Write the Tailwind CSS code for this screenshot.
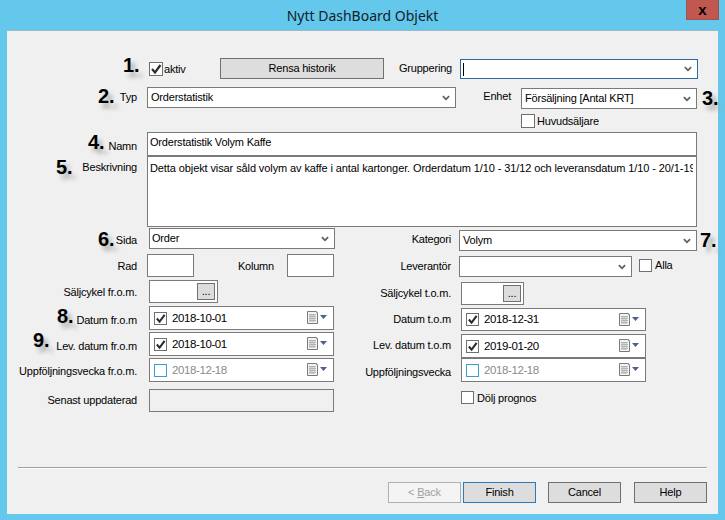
<!DOCTYPE html>
<html lang="sv">
<head>
    <meta charset="UTF-8">
    <title>Nytt DashBoard Objekt</title>
    <script src="https://cdn.jsdelivr.net/npm/@tailwindcss/browser@4"></script>
</head>
<body class="w-[725px] h-[520px] overflow-hidden bg-[#63c8ec] font-['Liberation_Sans',sans-serif] text-[11px] leading-[13px] tracking-[-0.2px] text-black">
    <svg class="hidden">
        <symbol id="chev" viewBox="0 0 9 6"><path d="M1 1 L4.5 4.5 L8 1" fill="none" stroke="#5f5f5f" stroke-width="2"/></symbol>
        <symbol id="tick" viewBox="0 0 12 12"><path d="M2 6 L5 9.5 L10.5 2" fill="none" stroke="#2b2b2b" stroke-width="2.2"/></symbol>
        <symbol id="cal" viewBox="0 0 21 14">
            <path d="M0.5 0.5 H9.5 V1.5 H10.5 V12.5 H0.5 Z" fill="#f3f3f3" stroke="#7a7a7a"/>
            <path d="M2 3.5 H9 M2 5.5 H9 M2 7.5 H9 M2 9.5 H9 M3 3 V11 M5 3 V11 M7 3 V11" stroke="#b4b4b4" stroke-width="1"/>
            <path d="M13 4 H20 L16.5 8 Z" fill="#4c5f8c"/>
        </symbol>
    </svg>

    <header class="relative h-[30px] flex items-center justify-center font-['Noto_Sans',sans-serif] text-[14px] tracking-normal text-[#14222a]">
        <span>Nytt DashBoard Objekt</span>
        <button class="absolute right-[6px] top-0 w-[33px] h-[20px] bg-[#c1584f] border border-[#9b5550] border-t-0 flex items-center justify-center font-['Liberation_Sans',sans-serif] font-bold text-[15px] leading-[14px] text-black">x</button>
    </header>

    <main class="relative ml-[7px] w-[711px] h-[484px] bg-[#f0f0f0] border-t border-[#9fb8c4] pt-[27px]">
        <!-- topp -->
        <div class="flex h-[21px]">
            <span class="ml-[142px] mt-[4px] w-[14px] h-[14px] bg-white border border-[#707070] flex items-center justify-center"><svg class="w-[12px] h-[12px]"><use href="#tick"/></svg></span>
            <span class="ml-[1px] mt-[5px] w-[56px]">aktiv</span>
            <button class="w-[164px] h-[21px] bg-[#dddddd] border border-[#707070]">Rensa historik</button>
            <span class="w-[68px] mt-[4px] text-right">Gruppering</span>
            <div class="ml-[8px] mt-[1px] w-[238px] h-[20px] bg-white border border-[#2d6a9f] flex items-center justify-between pl-[2px] pr-[5px]">
                <span class="w-px h-[13px] bg-black"></span>
                <svg class="w-[8px] h-[6px]"><use href="#chev"/></svg>
            </div>
        </div>
        <div class="flex mt-[8px] h-[22px]">
            <span class="w-[130px] mt-[4px] text-right">Typ</span>
            <div class="ml-[10px] w-[309px] h-[21px] bg-white border border-[#7a7a7a] flex items-center justify-between pl-[3px] pr-[5px]">
                <span>Orderstatistik</span>
                <svg class="w-[8px] h-[6px]"><use href="#chev"/></svg>
            </div>
            <span class="w-[55px] mt-[3px] text-right">Enhet</span>
            <div class="ml-[10px] mt-[1px] w-[176px] h-[21px] bg-white border border-[#7a7a7a] flex items-center justify-between pl-[3px] pr-[5px]">
                <span>Försäljning [Antal KRT]</span>
                <svg class="w-[8px] h-[6px]"><use href="#chev"/></svg>
            </div>
        </div>
        <div class="flex mt-[5px] h-[14px] pl-[514px]">
            <span class="w-[14px] h-[14px] bg-white border border-[#707070]"></span>
            <span class="ml-[2px] mt-[1px]">Huvudsäljare</span>
        </div>
        <div class="flex mt-[4px] h-[24px]">
            <span class="w-[130px] mt-[8px] text-right">Namn</span>
            <div class="ml-[10px] w-[550px] h-[24px] bg-white border border-[#7a7a7a] pl-[2px] pb-[3px] flex items-center">Orderstatistik Volym Kaffe</div>
        </div>
        <div class="flex h-[71px]">
            <span class="w-[130px] mt-[5px] text-right">Beskrivning</span>
            <div class="ml-[10px] w-[550px] h-[71px] bg-white border border-[#7a7a7a] pl-[2px] pt-[5px]">
                <div class="w-[543px] overflow-hidden whitespace-nowrap tracking-[-0.1px]">Detta objekt visar såld volym av kaffe i antal kartonger. Orderdatum 1/10 - 31/12 och leveransdatum 1/10 - 20/1-19</div>
            </div>
        </div>

        <!-- två kolumner -->
        <div class="flex mt-[1px]">
            <div class="w-[335px]">
                <div class="flex h-[21px]">
                    <span class="w-[130px] mt-[6px] text-right">Sida</span>
                    <div class="ml-[12px] w-[186px] h-[21px] bg-white border border-[#7a7a7a] flex items-center justify-between pl-[2px] pr-[5px]">
                        <span>Order</span>
                        <svg class="w-[8px] h-[6px]"><use href="#chev"/></svg>
                    </div>
                </div>
                <div class="flex mt-[5px] h-[23px]">
                    <span class="w-[130px] mt-[6px] text-right">Rad</span>
                    <div class="ml-[10px] w-[47px] h-[23px] bg-white border border-[#7a7a7a]"></div>
                    <span class="w-[80px] mt-[6px] text-right">Kolumn</span>
                    <div class="ml-[13px] w-[47px] h-[23px] bg-white border border-[#7a7a7a]"></div>
                </div>
                <div class="flex mt-[3px] h-[23px]">
                    <span class="w-[130px] mt-[6px] text-right">Säljcykel fr.o.m.</span>
                    <div class="ml-[12px] w-[69px] h-[23px] bg-white border border-[#7a7a7a] pl-[47px] pt-[2px]">
                        <button class="block w-[18px] h-[17px] bg-[#dddddd] border border-[#707070] leading-[11px]">...</button>
                    </div>
                </div>
                <div class="flex mt-[3px] h-[24px]">
                    <span class="w-[130px] mt-[8px] text-right">Datum fr.o.m</span>
                    <div class="ml-[12px] w-[185px] h-[24px] bg-white border border-[#7a7a7a] flex items-center pl-[4px] pr-[5px]">
                        <span class="w-[13px] h-[13px] border border-[#707070] flex items-center justify-center"><svg class="w-[11px] h-[11px]"><use href="#tick"/></svg></span>
                        <span class="ml-[5px] flex-1 text-[11.5px] tracking-[-0.4px]">2018-10-01</span>
                        <svg class="w-[21px] h-[14px]"><use href="#cal"/></svg>
                    </div>
                </div>
                <div class="flex mt-[2px] h-[24px]">
                    <span class="w-[130px] mt-[8px] text-right">Lev. datum fr.o.m</span>
                    <div class="ml-[12px] w-[185px] h-[24px] bg-white border border-[#7a7a7a] flex items-center pl-[4px] pr-[5px]">
                        <span class="w-[13px] h-[13px] border border-[#707070] flex items-center justify-center"><svg class="w-[11px] h-[11px]"><use href="#tick"/></svg></span>
                        <span class="ml-[5px] flex-1 text-[11.5px] tracking-[-0.4px]">2018-10-01</span>
                        <svg class="w-[21px] h-[14px]"><use href="#cal"/></svg>
                    </div>
                </div>
                <div class="flex mt-[2px] h-[24px]">
                    <span class="w-[130px] mt-[7px] text-right whitespace-nowrap">Uppföljningsvecka fr.o.m.</span>
                    <div class="ml-[12px] w-[185px] h-[24px] bg-white border border-[#7a7a7a] flex items-center pl-[4px] pr-[5px]">
                        <span class="w-[13px] h-[13px] border border-[#3a9bd8]"></span>
                        <span class="ml-[5px] flex-1 text-[11.5px] tracking-[-0.4px] text-[#8a8a8a]">2018-12-18</span>
                        <svg class="w-[21px] h-[14px]"><use href="#cal"/></svg>
                    </div>
                </div>
                <div class="flex mt-[7px] h-[23px]">
                    <span class="w-[130px] mt-[5px] text-right">Senast uppdaterad</span>
                    <div class="ml-[12px] w-[185px] h-[23px] bg-[#f0f0f0] border border-[#7a7a7a]"></div>
                </div>
            </div>
            <div class="w-[376px] mt-[2px]">
                <div class="flex h-[21px]">
                    <span class="w-[109px] mt-[3px] text-right">Kategori</span>
                    <div class="ml-[8px] w-[238px] h-[21px] bg-white border border-[#7a7a7a] flex items-center justify-between pl-[3px] pr-[5px]">
                        <span>Volym</span>
                        <svg class="w-[8px] h-[6px]"><use href="#chev"/></svg>
                    </div>
                </div>
                <div class="flex mt-[5px] h-[21px]">
                    <span class="w-[109px] mt-[4px] text-right">Leverantör</span>
                    <div class="ml-[8px] w-[173px] h-[21px] bg-white border border-[#7a7a7a] flex items-center justify-end pr-[5px]">
                        <svg class="w-[8px] h-[6px]"><use href="#chev"/></svg>
                    </div>
                    <span class="ml-[7px] mt-[3px] w-[13px] h-[13px] bg-white border border-[#707070]"></span>
                    <span class="ml-[3px] mt-[3px]">Alla</span>
                </div>
                <div class="flex mt-[5px] h-[23px]">
                    <span class="w-[109px] mt-[5px] text-right">Säljcykel t.o.m.</span>
                    <div class="ml-[10px] w-[63px] h-[23px] bg-white border border-[#7a7a7a] pl-[41px] pt-[2px]">
                        <button class="block w-[18px] h-[17px] bg-[#dddddd] border border-[#707070] leading-[11px]">...</button>
                    </div>
                </div>
                <div class="flex mt-[3px] h-[23px]">
                    <span class="w-[109px] mt-[5px] text-right">Datum t.o.m</span>
                    <div class="ml-[10px] w-[185px] h-[23px] bg-white border border-[#7a7a7a] flex items-center pl-[4px] pr-[5px]">
                        <span class="w-[13px] h-[13px] border border-[#707070] flex items-center justify-center"><svg class="w-[11px] h-[11px]"><use href="#tick"/></svg></span>
                        <span class="ml-[5px] flex-1 text-[11.5px] tracking-[-0.4px]">2018-12-31</span>
                        <svg class="w-[21px] h-[14px]"><use href="#cal"/></svg>
                    </div>
                </div>
                <div class="flex mt-[3px] h-[24px]">
                    <span class="w-[109px] mt-[5px] text-right">Lev. datum t.o.m</span>
                    <div class="ml-[10px] w-[185px] h-[24px] bg-white border border-[#7a7a7a] flex items-center pl-[4px] pr-[5px]">
                        <span class="w-[13px] h-[13px] border border-[#707070] flex items-center justify-center"><svg class="w-[11px] h-[11px]"><use href="#tick"/></svg></span>
                        <span class="ml-[5px] flex-1 text-[11.5px] tracking-[-0.4px]">2019-01-20</span>
                        <svg class="w-[21px] h-[14px]"><use href="#cal"/></svg>
                    </div>
                </div>
                <div class="flex h-[24px]">
                    <span class="w-[109px] mt-[8px] text-right whitespace-nowrap">Uppföljningsvecka</span>
                    <div class="ml-[10px] w-[185px] h-[24px] bg-white border border-[#7a7a7a] flex items-center pl-[4px] pr-[5px]">
                        <span class="w-[13px] h-[13px] border border-[#3a9bd8]"></span>
                        <span class="ml-[5px] flex-1 text-[11.5px] tracking-[-0.4px] text-[#8a8a8a]">2018-12-18</span>
                        <svg class="w-[21px] h-[14px]"><use href="#cal"/></svg>
                    </div>
                </div>
                <div class="flex mt-[9px] h-[14px] pl-[119px]">
                    <span class="w-[13px] h-[13px] bg-white border border-[#707070]"></span>
                    <span class="ml-[3px] mt-[1px]">Dölj prognos</span>
                </div>
            </div>
        </div>

        <!-- knappar -->
        <div class="absolute left-[11px] top-[436px] w-[689px] h-[2px] border-t border-[#a0a0a0] border-b border-b-white"></div>
        <div class="absolute left-[381px] top-[451px] flex">
            <button class="w-[73px] h-[21px] bg-[#f4f4f4] border border-[#b0b0b0] text-[#a0a0a0]">&lt; <u>B</u>ack</button>
            <button class="ml-[2px] w-[73px] h-[21px] bg-[#dddddd] border border-[#2d7ab5]">Finish</button>
            <button class="ml-[12px] w-[73px] h-[21px] bg-[#dddddd] border border-[#707070]">Cancel</button>
            <button class="ml-[13px] w-[73px] h-[21px] bg-[#dddddd] border border-[#707070]">Help</button>
        </div>

        <!-- numrering -->
        <span class="absolute left-[116px] top-[23px] text-[20px] leading-[22px] tracking-normal font-bold [text-shadow:4px_5px_4px_#aaa]">1.</span>
        <span class="absolute left-[91px] top-[54px] text-[20px] leading-[22px] tracking-normal font-bold [text-shadow:4px_5px_4px_#aaa]">2.</span>
        <span class="absolute left-[695px] top-[56px] text-[20px] leading-[22px] tracking-normal font-bold [text-shadow:4px_5px_4px_#aaa]">3.</span>
        <span class="absolute left-[81px] top-[100px] text-[20px] leading-[22px] tracking-normal font-bold [text-shadow:4px_5px_4px_#aaa]">4.</span>
        <span class="absolute left-[49px] top-[125px] text-[20px] leading-[22px] tracking-normal font-bold [text-shadow:4px_5px_4px_#aaa]">5.</span>
        <span class="absolute left-[91px] top-[197px] text-[20px] leading-[22px] tracking-normal font-bold [text-shadow:4px_5px_4px_#aaa]">6.</span>
        <span class="absolute left-[693px] top-[198px] text-[20px] leading-[22px] tracking-normal font-bold [text-shadow:4px_5px_4px_#aaa]">7.</span>
        <span class="absolute left-[50px] top-[274px] text-[20px] leading-[22px] tracking-normal font-bold [text-shadow:4px_5px_4px_#aaa]">8.</span>
        <span class="absolute left-[26px] top-[298px] text-[20px] leading-[22px] tracking-normal font-bold [text-shadow:4px_5px_4px_#aaa]">9.</span>
    </main>
</body>
</html>
